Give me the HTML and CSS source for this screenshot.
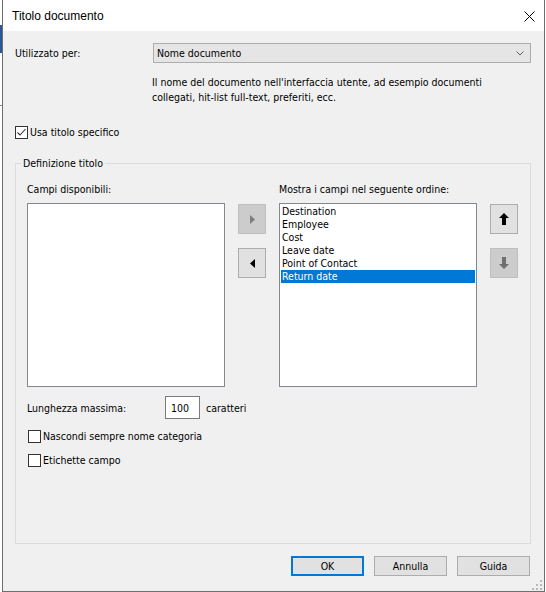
FILE: index.html
```html
<!DOCTYPE html>
<html lang="it">
<head>
<meta charset="utf-8">
<title>Titolo documento</title>
<link rel="stylesheet" href="styles.css">
</head>
<body>
<div class="window">
  <div class="titlebar">
    <span class="title">Titolo documento</span>
    <svg class="close" width="11" height="11" viewBox="0 0 11 11"><path d="M0.5 0.5L10.5 10.5M10.5 0.5L0.5 10.5" stroke="#000" stroke-width="1" fill="none"/></svg>
  </div>
  <div class="client">
    <div class="used-row">
      <span class="used-label">Utilizzato per:</span>
      <div class="select">
        <span>Nome documento</span>
        <svg width="8" height="5" viewBox="0 0 8 5"><polyline points="0.5,0.5 4,4 7.5,0.5" stroke="#606060" stroke-width="1" fill="none"/></svg>
      </div>
    </div>
    <p class="desc">Il nome del documento nell'interfaccia utente, ad esempio documenti<br>collegati, hit-list full-text, preferiti, ecc.</p>
    <label class="check top"><span class="box"><svg width="11" height="11" viewBox="0 0 11 11"><polyline points="1.5,5.5 4,8 9.5,2" stroke="#333" stroke-width="1.1" fill="none"/></svg></span>Usa titolo specifico</label>
    <fieldset class="group">
      <legend>Definizione titolo</legend>
      <div class="group-body">
        <div class="fields">
          <div class="cap">Campi disponibili:</div>
          <div></div>
          <div class="cap">Mostra i campi nel seguente ordine:</div>
          <div></div>
          <div class="list"></div>
          <div class="btncol">
            <button class="sq off"><svg width="5" height="9" viewBox="0 0 5 9"><polygon points="0,0 5,4.5 0,9" fill="#7d7d7d"/></svg></button>
            <button class="sq"><svg width="5" height="9" viewBox="0 0 5 9"><polygon points="5,0 0,4.5 5,9" fill="#000"/></svg></button>
          </div>
          <div class="list">
            <div class="item">Destination</div>
            <div class="item">Employee</div>
            <div class="item">Cost</div>
            <div class="item">Leave date</div>
            <div class="item">Point of Contact</div>
            <div class="item sel">Return date</div>
          </div>
          <div class="btncol">
            <button class="sq"><svg width="10" height="12" viewBox="0 0 10 12"><polygon points="5,0 10,5 7,5 7,12 3,12 3,5 0,5" fill="#000"/></svg></button>
            <button class="sq off"><svg width="10" height="12" viewBox="0 0 10 12"><polygon points="3,0 7,0 7,7 10,7 5,12 0,7 3,7" fill="#6f6f6f"/></svg></button>
          </div>
        </div>
        <div class="maxlen">
          <span class="maxlen-label">Lunghezza massima:</span>
          <span class="num">100</span>
          <span class="unit">caratteri</span>
        </div>
        <label class="check inner"><span class="box"></span>Nascondi sempre nome categoria</label>
        <label class="check inner"><span class="box"></span>Etichette campo</label>
      </div>
    </fieldset>
    <div class="actions">
      <button class="btn default">OK</button>
      <button class="btn">Annulla</button>
      <button class="btn">Guida</button>
    </div>
  </div>
  <svg class="grip" width="10" height="10" viewBox="0 0 10 10">
    <rect x="8" y="0" width="2" height="2" fill="#b8b8b8"/>
    <rect x="4" y="4" width="2" height="2" fill="#b8b8b8"/>
    <rect x="8" y="4" width="2" height="2" fill="#b8b8b8"/>
    <rect x="0" y="8" width="2" height="2" fill="#b8b8b8"/>
    <rect x="4" y="8" width="2" height="2" fill="#b8b8b8"/>
    <rect x="8" y="8" width="2" height="2" fill="#b8b8b8"/>
  </svg>
</div>
</body>
</html>
```

FILE: styles.css
```css
html {
  background:
    linear-gradient(#2b579a, #2b579a) 0 25px / 2px 28px no-repeat,
    linear-gradient(#8a8a8a, #8a8a8a) 0 105px / 2px 1px no-repeat,
    #fff;
}
body {
  margin: 0;
  font-family: "DejaVu Sans Condensed", "Liberation Sans", Arial, sans-serif;
  font-size: 10.5px;
  color: #000;
}
.window {
  position: relative;
  margin-left: 2px;
  width: 543px;
  height: 592px;
  box-sizing: border-box;
  border: 1px solid #6e6e6e;
  border-top: none;
  display: flex;
  flex-direction: column;
}
.titlebar {
  height: 31px;
  flex: none;
  background: #fff;
  display: flex;
  align-items: center;
  justify-content: space-between;
  padding: 0 9px 0 9px;
}
.title {
  font-family: "Liberation Sans", Arial, sans-serif;
  font-size: 12px;
}
.close {
  margin-top: 2px;
}
.client {
  flex: 1;
  background: #f0f0f0;
  display: flex;
  flex-direction: column;
  padding: 12px 13px 15px 12px;
  min-height: 0;
}
.used-row {
  display: flex;
  align-items: center;
}
.used-label {
  width: 138px;
  flex: none;
}
.select {
  flex: 1;
  height: 20px;
  box-sizing: border-box;
  border: 1px solid #adadad;
  background: #e5e5e5;
  display: flex;
  align-items: center;
  justify-content: space-between;
  padding: 0 6px 0 3px;
}
.desc {
  margin: 12px 0 0 137px;
  line-height: 15px;
}
.check {
  display: flex;
  align-items: center;
  gap: 2px;
  line-height: 13px;
}
.check.top {
  margin-top: 21px;
}
.check.inner {
  margin-top: 11px;
  margin-left: 1px;
}
.box {
  width: 13px;
  height: 13px;
  box-sizing: border-box;
  border: 1px solid #333;
  background: #fff;
  display: flex;
  align-items: center;
  justify-content: center;
  flex: none;
}
.group {
  margin: 17px 0 0;
  padding: 0;
  border: 1px solid #dcdcdc;
  flex: 1;
  min-width: 0;
}
.group legend {
  padding: 0 2px;
  margin-left: 5px;
  line-height: 14px;
}
.group-body {
  padding: 13px 12px 0 11px;
}
.fields {
  display: grid;
  grid-template-columns: 198px 28px 198px 28px;
  column-gap: 13px;
}
.cap {
  line-height: 13px;
  margin-bottom: 7px;
}
.list {
  height: 184px;
  box-sizing: border-box;
  border: 1px solid #828790;
  background: #fff;
  padding: 1px;
}
.item {
  height: 13px;
  line-height: 13px;
  padding-left: 1px;
  white-space: nowrap;
}
.item.sel {
  background: #0078d7;
  color: #fff;
}
.btncol {
  display: flex;
  flex-direction: column;
  gap: 14px;
  padding-top: 1px;
}
.sq {
  width: 28px;
  height: 30px;
  box-sizing: border-box;
  border: 1px solid #adadad;
  background: #e1e1e1;
  display: flex;
  align-items: center;
  justify-content: center;
  padding: 0;
  margin: 0;
}
.sq.off {
  background: #cccccc;
  border-color: #bfbfbf;
}
.maxlen {
  display: flex;
  align-items: center;
  margin-top: 9px;
}
.maxlen-label {
  width: 138px;
  flex: none;
}
.num {
  width: 35px;
  height: 23px;
  box-sizing: border-box;
  border: 1px solid #7a7a7a;
  background: #fff;
  padding-left: 5px;
  display: flex;
  align-items: center;
}
.unit {
  margin-left: 6px;
}
.actions {
  display: flex;
  justify-content: flex-end;
  gap: 10px;
  margin-top: 12px;
  padding-right: 1px;
}
.btn {
  width: 73px;
  height: 20px;
  box-sizing: border-box;
  border: 1px solid #adadad;
  background: #e1e1e1;
  font: inherit;
  color: #000;
  padding: 0;
  margin: 0;
}
.btn.default {
  border: 2px solid #0078d7;
}
.grip {
  position: absolute;
  right: 2px;
  bottom: 1px;
}
```
